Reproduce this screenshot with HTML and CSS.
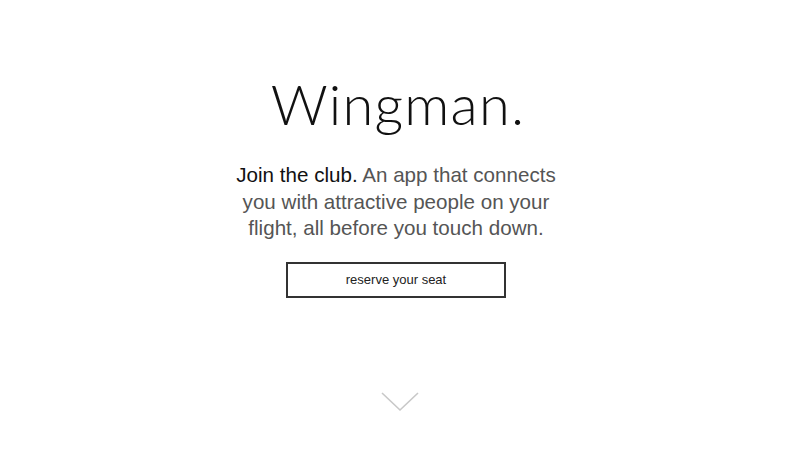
FILE: index.html
```html
<!DOCTYPE html>
<html lang="en">
<head>
  <meta charset="UTF-8" />
  <title>Wingman.</title>
  <link rel="stylesheet" href="styles.css">
</head>
<body>

<section class="hero">
  <h1 class="logo">Wingman.</h1>
  <p class="pitch">
    <span class="lead">Join the club.</span> An app that connects you with attractive people on your flight, all before you touch down.
  </p>
  <a href="#signup" class="reserve">reserve your seat</a>
</section>

<a href="#more" class="scroll-down" aria-label="Scroll down">
  <svg width="40" height="20" viewBox="0 0 40 20">
    <polyline points="2,1 20,18 38,1" fill="none" stroke="#c8c8c8" stroke-width="1.6" />
  </svg>
</a>

</body>
</html>
```

FILE: styles.css
```css
body {
  margin: 0;
  font-family: "Liberation Sans", Arial, sans-serif;
  background: #fff;
  color: #555;
  height: 450px;
  display: flex;
  flex-direction: column;
  align-items: center;
}

.hero {
  display: flex;
  flex-direction: column;
  align-items: center;
  padding-top: 73px;
  margin-left: -4px;
}

.logo {
  margin: 0;
  font-family: Lato, sans-serif;
  font-weight: 300;
  font-size: 56px;
  line-height: 62px;
  color: #111;
  letter-spacing: 1.2px;
}

.pitch {
  width: 340px;
  margin: 27px 0 0;
  margin-left: -4px;
  text-align: center;
  font-size: 20.6px;
  line-height: 26.5px;
}

.pitch .lead {
  color: #111;
}

.reserve {
  margin-top: 20px;
  margin-left: -4px;
  width: 216px;
  height: 32px;
  border: 2px solid #333;
  display: flex;
  align-items: center;
  justify-content: center;
  color: #222;
  font-size: 13px;
  text-decoration: none;
}

.scroll-down {
  margin-top: 94px;
  display: block;
  line-height: 0;
}
```
